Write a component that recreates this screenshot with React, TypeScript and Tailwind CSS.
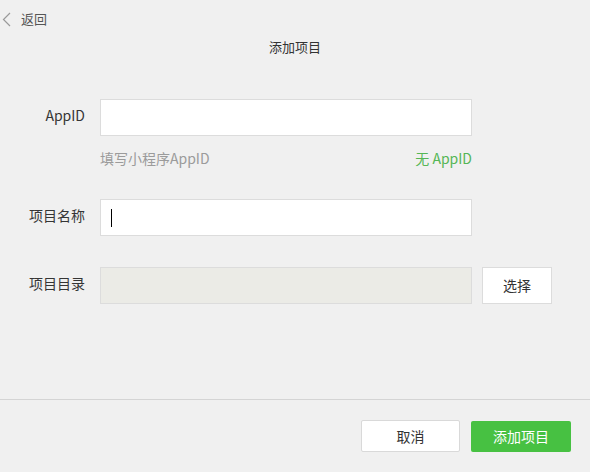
export default function App() {
  const font = { fontFamily: '"Noto Sans CJK SC", "Microsoft YaHei", sans-serif' };

  return (
    <div
      className="flex h-[472px] w-[590px] flex-col overflow-hidden bg-[#f0f0f0] text-[#353535]"
      style={font}
    >
      {/* Header */}
      <div className="flex h-[38px] items-center pl-[2px]">
        <svg width="9" height="15" viewBox="0 0 9 15" fill="none">
          <path d="M8 1L1.5 7.5L8 14" stroke="#9a9a9a" strokeWidth="1.2" />
        </svg>
        <span className="ml-[10px] text-[13px] leading-[18px] text-[#555]">
          返回
        </span>
      </div>
      <div className="h-[18px] text-center text-[13px] leading-[18px] text-[#333]">
        添加项目
      </div>

      {/* Form */}
      <div className="flex-1 pt-[43px]">
        <div className="flex items-start">
          <label className="w-[85px] pt-[6px] text-right text-[14px] leading-[20px]">
            AppID
          </label>
          <div className="ml-[15px] h-[37px] w-[372px] border border-[#dcdcdc] bg-white" />
        </div>
        <div className="ml-[100px] mt-[13px] flex h-[18px] w-[372px] justify-between text-[14px] leading-[18px]">
          <span className="text-[#9b9b9b]">填写小程序AppID</span>
          <span className="text-[#55b655]">无 AppID</span>
        </div>

        <div className="mt-[32px] flex items-start">
          <label className="w-[85px] pt-[6px] text-right text-[14px] leading-[20px]">
            项目名称
          </label>
          <div className="ml-[15px] flex h-[37px] w-[372px] items-center border border-[#dcdcdc] bg-white pl-[10px]">
            <div className="h-[18px] w-px bg-black" />
          </div>
        </div>

        <div className="mt-[31px] flex items-start">
          <label className="w-[85px] pt-[6px] text-right text-[14px] leading-[20px]">
            项目目录
          </label>
          <div className="ml-[15px] h-[37px] w-[372px] border border-[#dcdcdc] bg-[#ebebe6]" />
          <button className="ml-[10px] h-[37px] w-[70px] border border-[#dcdcdc] bg-white text-[14px] text-[#333]">
            选择
          </button>
        </div>
      </div>

      {/* Footer */}
      <div className="flex h-[73px] items-start justify-end gap-[11px] border-t border-[#d4d4d4] pr-[19px] pt-[20px]">
        <button className="h-[32px] w-[99px] rounded-[2px] border border-[#d9d9d9] bg-white text-[14px] text-[#333]">
          取消
        </button>
        <button className="mt-px h-[31px] w-[100px] rounded-[2px] bg-[#47c142] text-[14px] text-white">
          添加项目
        </button>
      </div>
    </div>
  );
}
